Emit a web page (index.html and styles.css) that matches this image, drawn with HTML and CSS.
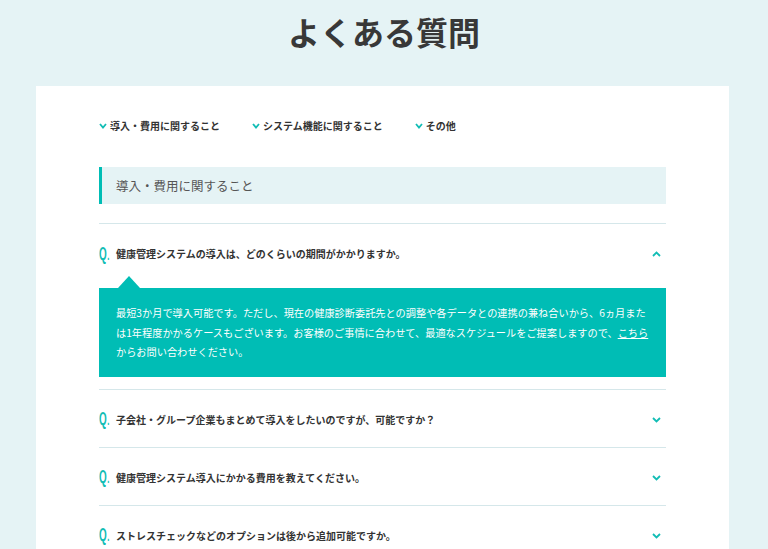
FILE: index.html
```html
<!DOCTYPE html>
<html lang="ja">
<head>
<meta charset="utf-8">
<title>よくある質問</title>
<link rel="stylesheet" href="styles.css">
</head>
<body>
<h1 class="title">よくある質問</h1>
<main class="card">
  <nav class="tabs">
    <a class="tab" href="#"><svg class="tab-ico" viewBox="0 0 8 6" width="8" height="6"><polyline points="1,1 4,4.5 7,1" fill="none" stroke="#12bdb5" stroke-width="1.8"/></svg>導入・費用に関すること</a>
    <a class="tab" href="#"><svg class="tab-ico" viewBox="0 0 8 6" width="8" height="6"><polyline points="1,1 4,4.5 7,1" fill="none" stroke="#12bdb5" stroke-width="1.8"/></svg>システム機能に関すること</a>
    <a class="tab" href="#"><svg class="tab-ico" viewBox="0 0 8 6" width="8" height="6"><polyline points="1,1 4,4.5 7,1" fill="none" stroke="#12bdb5" stroke-width="1.8"/></svg>その他</a>
  </nav>
  <h2 class="section">導入・費用に関すること</h2>
  <div class="faq">
    <div class="item open">
      <div class="q"><span class="q-mark">Q<span class="dot">.</span></span><span class="q-text">健康管理システムの導入は、どのくらいの期間がかかりますか。</span><svg class="chev" viewBox="0 0 9 6" width="9" height="6"><polyline points="1,5 4.5,1.5 8,5" fill="none" stroke="#12bdb5" stroke-width="1.8"/></svg></div>
      <div class="a">最短3か月で導入可能です。ただし、現在の健康診断委託先との調整や各データとの連携の兼ね合いから、6ヵ月また<br>は1年程度かかるケースもございます。お客様のご事情に合わせて、最適なスケジュールをご提案しますので、<a href="#">こちら</a><br>からお問い合わせください。</div>
    </div>
    <div class="item">
      <div class="q"><span class="q-mark">Q<span class="dot">.</span></span><span class="q-text">子会社・グループ企業もまとめて導入をしたいのですが、可能ですか？</span><svg class="chev" viewBox="0 0 9 6" width="9" height="6"><polyline points="1,1 4.5,4.5 8,1" fill="none" stroke="#12bdb5" stroke-width="1.8"/></svg></div>
    </div>
    <div class="item">
      <div class="q"><span class="q-mark">Q<span class="dot">.</span></span><span class="q-text">健康管理システム導入にかかる費用を教えてください。</span><svg class="chev" viewBox="0 0 9 6" width="9" height="6"><polyline points="1,1 4.5,4.5 8,1" fill="none" stroke="#12bdb5" stroke-width="1.8"/></svg></div>
    </div>
    <div class="item">
      <div class="q"><span class="q-mark">Q<span class="dot">.</span></span><span class="q-text">ストレスチェックなどのオプションは後から追加可能ですか。</span><svg class="chev" viewBox="0 0 9 6" width="9" height="6"><polyline points="1,1 4.5,4.5 8,1" fill="none" stroke="#12bdb5" stroke-width="1.8"/></svg></div>
    </div>
  </div>
</main>
</body>
</html>
```
FILE: styles.css
```css
html, body {
  margin: 0;
  padding: 0;
  background: #e5f3f5;
  height: 100%;
  overflow: hidden;
}
body {
  font-family: "Noto Sans CJK JP", "Noto Sans", sans-serif;
  color: #333;
}
.title {
  margin: 0;
  padding-top: 9px;
  height: 77px;
  box-sizing: border-box;
  text-align: center;
  font-size: 32px;
  line-height: 44px;
  font-weight: 700;
  color: #383838;
}
.card {
  display: block;
  background: #fff;
  width: 693px;
  margin-left: 36px;
  margin-top: 9px;
  padding: 33px 63px 40px;
  box-sizing: border-box;
  min-height: 600px;
}
.tabs {
  display: flex;
  gap: 32px;
  height: 14px;
}
.tab {
  display: flex;
  align-items: center;
  gap: 3px;
  font-size: 10px;
  line-height: 14px;
  font-weight: 700;
  color: #333;
  text-decoration: none;
}
.tab-ico {
  display: block;
}
.section {
  margin: 34px 0 19px;
  height: 37px;
  box-sizing: border-box;
  background: #e5f3f5;
  border-left: 3px solid #00bdb5;
  padding-left: 14px;
  font-size: 12.5px;
  line-height: 37px;
  font-weight: 400;
  color: #555;
}
.item {
  border-top: 1px solid #d5e7ea;
}
.q {
  display: flex;
  align-items: center;
  padding: 23px 5px 20px 0;
  height: 14px;
}
.q-mark {
  display: inline-block;
  width: 17px;
  flex: none;
  font-family: "Liberation Sans", sans-serif;
  font-weight: 700;
  font-size: 18px;
  line-height: 14px;
  color: #12bdb5;
  transform: scaleX(0.55);
  transform-origin: left center;
  white-space: nowrap;
}
.q-mark .dot {
  font-size: 14px;
  margin-left: 1px;
}
.q-text {
  flex: 1;
  font-size: 10px;
  line-height: 14px;
  font-weight: 700;
  color: #333;
}
.chev {
  display: block;
}
.a {
  position: relative;
  margin: 7px 0 12px;
  background: #00bdb5;
  color: #fff;
  font-size: 10.2px;
  line-height: 19.5px;
  padding: 15px 8px 15px 17px;
  white-space: nowrap;
}
.a::before {
  content: "";
  position: absolute;
  left: 19px;
  top: -12px;
  border-left: 11px solid transparent;
  border-right: 11px solid transparent;
  border-bottom: 12px solid #00bdb5;
}
.a a {
  color: #fff;
  text-decoration: underline;
}
```
